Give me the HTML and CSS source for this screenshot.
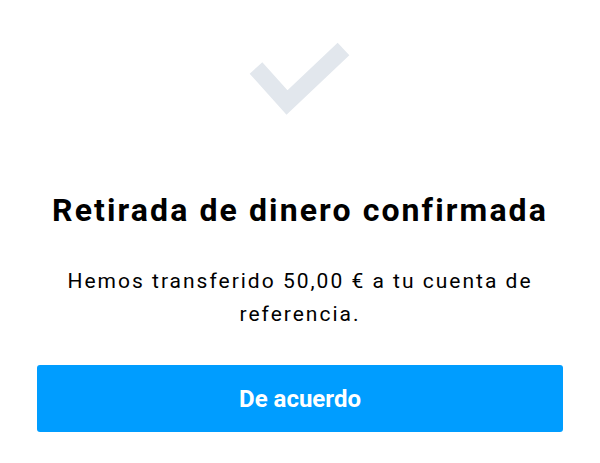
FILE: index.html
```html
<!DOCTYPE html>
<html lang="es">
<head>
  <meta charset="UTF-8" />
  <meta name="viewport" content="width=device-width, initial-scale=1.0"/>
  <title>Retirada confirmada</title>
  <link rel="stylesheet" href="styles.css">
</head>
<body>
  <div class="screen">
    <div class="check">
      <svg width="120" height="90" viewBox="240 35 120 90">
        <path d="M256 68 L287 102.5 L343.5 49" fill="none" stroke="#e2e7ed" stroke-width="17" stroke-linejoin="miter"/>
      </svg>
    </div>
    <h1 class="title">Retirada de dinero confirmada</h1>
    <p class="message">Hemos transferido 50,00 € a tu cuenta de referencia.</p>
    <button class="ok-btn">De acuerdo</button>
  </div>
</body>
</html>
```

FILE: styles.css
```css
body {
  margin: 0;
  background-color: #ffffff;
  color: #000000;
  font-family: Roboto, 'Liberation Sans', sans-serif;
}

.screen {
  display: flex;
  flex-direction: column;
  align-items: center;
  padding: 35px 37px 0;
}

.check {
  display: flex;
  justify-content: center;
  height: 90px;
}

.title {
  margin: 65px 0 0;
  font-size: 32px;
  font-weight: 700;
  line-height: 40px;
  letter-spacing: 2.1px;
  text-align: center;
}

.message {
  margin: 35px 0 0;
  font-size: 21px;
  line-height: 33px;
  letter-spacing: 2px;
  text-align: center;
  max-width: 490px;
}

.ok-btn {
  margin-top: 34px;
  width: 100%;
  height: 67px;
  background-color: #009dff;
  color: #ffffff;
  font-family: inherit;
  font-size: 24px;
  font-weight: 700;
  border: none;
  border-radius: 3px;
  cursor: pointer;
}
```
